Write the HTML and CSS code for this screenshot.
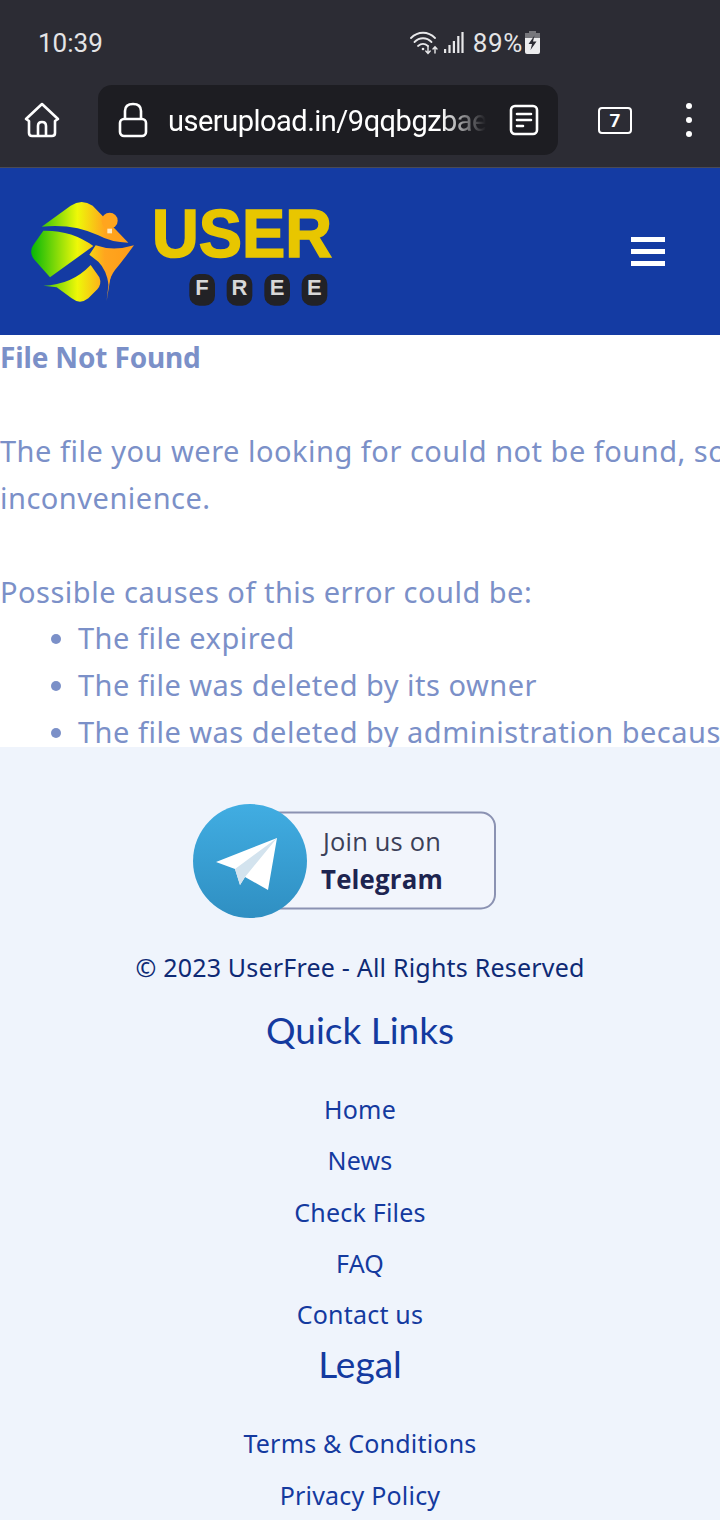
FILE: index.html
```html
<!DOCTYPE html>
<html lang="en">
<head>
    <meta charset="UTF-8">
    <meta name="viewport" content="width=device-width, initial-scale=1.0">
    <title>File Not Found - UserFree</title>
    <link rel="stylesheet" href="styles.css">
</head>
<body>
    <!-- Phone status bar and browser toolbar -->
    <div class="chrome">
        <div class="status-bar">
            <span class="clock">10:39</span>
            <div class="status-icons">
                <svg class="icon-wifi" width="30" height="24" viewBox="0 0 30 24" fill="none" stroke="#e8e8ea" stroke-linecap="round">
                    <path d="M1 7 C8 0 18 0 25 7" stroke-width="1.8"/>
                    <path d="M4.5 11 C9.5 6 16.5 6 21.5 11" stroke-width="1.8"/>
                    <path d="M8 15 C11 12.5 15 12.5 18 15" stroke-width="1.8"/>
                    <circle cx="13" cy="18" r="1.3" fill="#e8e8ea" stroke="none"/>
                    <path d="M18 15 V22 M15.8 20 L18 22.4 L20.2 20" stroke-width="1.4"/>
                    <path d="M25 22 V16 M23 18 L25 15.8 L27 18" stroke-width="1.4"/>
                </svg>
                <svg class="icon-signal" width="20" height="22" viewBox="0 0 20 22" fill="#e8e8ea">
                    <rect x="0" y="17" width="2.2" height="4"/>
                    <rect x="4.4" y="13" width="2.2" height="8"/>
                    <rect x="8.8" y="9" width="2.2" height="12"/>
                    <rect x="13.2" y="4" width="2.2" height="17"/>
                    <rect x="17.4" y="0" width="2.2" height="21"/>
                </svg>
                <span class="battery-level">89%</span>
                <svg class="icon-battery" width="15" height="23" viewBox="0 0 15 23">
                    <path d="M4 0 H11 V2 H15 V9 H0 V2 H4 Z" fill="#77777c"/>
                    <path d="M0 7 H15 V21 Q15 23 13 23 H2 Q0 23 0 21 Z" fill="#ececee"/>
                    <path d="M9.5 4.5 L3.5 13 H7 L5.5 19 L11.5 10.5 H8 Z" fill="#2c2c34"/>
                </svg>
            </div>
        </div>
        <div class="toolbar">
            <svg class="icon-home" width="36" height="36" viewBox="0 0 36 36" fill="none" stroke="#fff" stroke-width="2.6" stroke-linejoin="round">
                <path d="M2 17 L18 2 L34 17 L31 19 V31 Q31 34 28 34 H8 Q5 34 5 31 V19 Z"/>
                <path d="M14 34 V24 Q14 20 18 20 Q22 20 22 24 V34"/>
            </svg>
            <div class="url-bar">
                <svg class="icon-lock" width="30" height="36" viewBox="0 0 30 36" fill="none" stroke="#fff" stroke-width="2.6">
                    <path d="M7 17 V9 Q7 2 15 2 Q23 2 23 9 V17"/>
                    <rect x="2" y="17" width="26" height="17" rx="4"/>
                </svg>
                <span class="url-text">userupload.in/9qqbgzbaelu</span>
                <svg class="icon-doc" width="30" height="32" viewBox="0 0 30 32" fill="none" stroke="#fff" stroke-width="2.6" stroke-linecap="round">
                    <rect x="2" y="2" width="26" height="28" rx="4"/>
                    <path d="M8 10 H22 M8 16 H22 M8 22 H14"/>
                </svg>
            </div>
            <div class="tab-count">7</div>
            <div class="more-dots"><span></span><span></span><span></span></div>
        </div>
    </div>

    <!-- Site header -->
    <header class="site-header">
        <svg class="logo" width="360" height="167" viewBox="0 -6 1080 501">
            <defs>
                <linearGradient id="logoGrad" gradientUnits="userSpaceOnUse" x1="95" y1="0" x2="400" y2="0">
                    <stop offset="0" stop-color="#08b808"/>
                    <stop offset="0.45" stop-color="#eef808"/>
                    <stop offset="0.72" stop-color="#ffa51e"/>
                    <stop offset="1" stop-color="#ff9c18"/>
                </linearGradient>
            </defs>
            <!-- mark: four colour pieces with the blue showing between them -->
            <g fill="url(#logoGrad)">
                <path d="M125 170 L212 107 Q245 85 278 107 L305 135 L385 218 Q335 218 295 196 Q220 160 125 170 Z"/>
                <path d="M130 182 Q215 180 280 228 L150 322 L102 268 Q86 245 100 225 Z"/>
                <path d="M287 226 Q340 245 402 226 Q370 270 345 300 Q330 320 326 345 Q320 300 295 275 L268 254 Z"/>
                <path d="M130 347 Q215 345 272 285 L298 322 Q306 342 292 358 L265 385 Q240 405 215 385 L170 352 Z"/>
                <path d="M335 300 L320 392 L328 320 Z"/>
            </g>
            <circle cx="329" cy="152" r="24" fill="#ffa51e"/>
            <rect x="322" y="176" width="14" height="14" fill="#ffe9c0"/>
            <text class="logo-user" x="456" y="262" textLength="540" lengthAdjust="spacingAndGlyphs">USER</text>
            <g class="logo-keys">
                <rect x="568" y="312" width="77" height="95" rx="30"/>
                <rect x="680" y="312" width="77" height="95" rx="30"/>
                <rect x="793" y="312" width="77" height="95" rx="30"/>
                <rect x="905" y="312" width="77" height="95" rx="30"/>
            </g>
            <g class="logo-free">
                <text x="606" y="375">F</text>
                <text x="718" y="375">R</text>
                <text x="831" y="375">E</text>
                <text x="943" y="375">E</text>
            </g>
        </svg>
        <div class="menu-icon">
            <span class="bar"></span>
            <span class="bar"></span>
            <span class="bar"></span>
        </div>
    </header>

    <!-- Error message, cut off at the bottom by the frame -->
    <main class="content-frame">
        <div class="content-inner">
            <p class="error-title">File Not Found</p>
            <br>
            <p>The file you were looking for could not be found, sorry for any inconvenience.</p>
            <br>
            <p>Possible causes of this error could be:</p>
            <ul class="cause-list">
                <li>The file expired</li>
                <li>The file was deleted by its owner</li>
                <li>The file was deleted by administration because it didn't comply with our Terms of Use</li>
            </ul>
        </div>
    </main>

    <footer class="site-footer">
        <svg class="telegram-badge" width="304" height="116" viewBox="0 0 304 116">
            <defs>
                <linearGradient id="tgGrad" x1="0" y1="0" x2="0" y2="1">
                    <stop offset="0" stop-color="#41ade2"/>
                    <stop offset="1" stop-color="#2f8fc2"/>
                </linearGradient>
            </defs>
            <rect x="60" y="8.5" width="242" height="96" rx="14" fill="#f2f5fc" stroke="#8b92b2" stroke-width="2"/>
            <circle cx="57" cy="57" r="57" fill="url(#tgGrad)"/>
            <path d="M23 58 L84 34 L75 86 L52 73 L47 81 L42 65 Z" fill="#ffffff"/>
            <path d="M42 65 L84 34 L52 73 L47 81 Z" fill="#d3e3ee"/>
            <text class="badge-join" x="130" y="47" textLength="118" lengthAdjust="spacingAndGlyphs">Join us on</text>
            <text class="badge-telegram" x="128" y="85" textLength="122" lengthAdjust="spacingAndGlyphs">Telegram</text>
        </svg>
        <p class="copyright">© 2023 UserFree - All Rights Reserved</p>
        <h2 class="footer-heading">Quick Links</h2>
        <ul class="footer-links">
            <li><a href="#">Home</a></li>
            <li><a href="#">News</a></li>
            <li><a href="#">Check Files</a></li>
            <li><a href="#">FAQ</a></li>
            <li><a href="#">Contact us</a></li>
        </ul>
        <h2 class="footer-heading legal-heading">Legal</h2>
        <ul class="footer-links legal-links">
            <li><a href="#">Terms &amp; Conditions</a></li>
            <li><a href="#">Privacy Policy</a></li>
        </ul>
    </footer>
</body>
</html>
```

FILE: styles.css
```css
/* Basic reset */
body, html {
    margin: 0;
    padding: 0;
    width: 720px;
    height: 1520px;
    overflow: hidden;
    background-color: #eff4fc;
    font-family: 'Noto Sans', 'Open Sans', sans-serif;
}

p, ul, h2 {
    margin: 0;
    padding: 0;
}

/* Browser chrome */
.chrome {
    height: 167px;
    background-color: #2c2c34;
    border-bottom: 1px solid #4a4a55;
    font-family: 'Roboto', sans-serif;
    color: #ffffff;
}

.status-bar {
    height: 85px;
    display: flex;
    align-items: center;
    padding-left: 38px;
}

.clock {
    font-size: 26px;
    color: #e4e4e6;
}

.status-icons {
    margin-left: 307px;
    display: flex;
    align-items: center;
}

.icon-signal {
    margin-left: 4px;
}

.battery-level {
    margin-left: 9px;
    font-size: 26px;
    letter-spacing: 0.6px;
    color: #e4e4e6;
}

.icon-battery {
    margin-left: 2px;
}

.toolbar {
    height: 70px;
    display: flex;
    align-items: center;
    padding-left: 24px;
}

.url-bar {
    width: 460px;
    height: 70px;
    margin-left: 38px;
    padding-left: 20px;
    box-sizing: border-box;
    background-color: #1d1d22;
    border-radius: 14px;
    display: flex;
    align-items: center;
}

.url-text {
    width: 318px;
    margin-left: 20px;
    padding-top: 2px;
    overflow: hidden;
    white-space: nowrap;
    font-size: 29px;
    letter-spacing: -0.5px;
    -webkit-mask-image: linear-gradient(to right, #000 86%, transparent 100%);
    mask-image: linear-gradient(to right, #000 86%, transparent 100%);
}

.icon-doc {
    margin-left: 23px;
}

.tab-count {
    width: 30px;
    height: 23px;
    margin-left: 40px;
    border: 2.5px solid #ffffff;
    border-radius: 4px;
    display: flex;
    align-items: center;
    justify-content: center;
    font-size: 19px;
    font-weight: 700;
}

.more-dots {
    margin-left: 54px;
    display: flex;
    flex-direction: column;
    gap: 8px;
}

.more-dots span {
    width: 6px;
    height: 6px;
    border-radius: 50%;
    background-color: #ffffff;
}

/* Site header */
.site-header {
    height: 167px;
    background-color: #143ba3;
    display: flex;
    align-items: center;
    justify-content: space-between;
    padding-right: 55px;
}

.logo-user {
    font-family: 'Liberation Sans', sans-serif;
    font-weight: 700;
    font-size: 208px;
    fill: #e8c600;
    stroke: #e8c600;
    stroke-width: 5px;
}

.logo-keys {
    fill: #222226;
}

.logo-free {
    font-family: 'Liberation Sans', sans-serif;
    font-weight: 700;
    font-size: 66px;
    text-anchor: middle;
    fill: #d8d8d8;
}

.menu-icon .bar {
    display: block;
    width: 34px;
    height: 5px;
    margin: 7px 0;
    background-color: #ffffff;
}

/* Error message */
.content-frame {
    height: 412px;
    overflow: hidden;
    background-color: #ffffff;
}

.content-inner {
    width: 900px;
    margin-top: -1px;
    font-size: 29px;
    line-height: 46.9px;
    letter-spacing: 0.5px;
    color: #7b90c8;
}

.error-title {
    font-size: 28px;
    font-weight: 700;
    letter-spacing: -0.15px;
}

.cause-list {
    padding-left: 78px;
}

/* Footer */
.site-footer {
    padding-top: 57px;
    text-align: center;
    color: #143a9f;
    font-size: 25px;
    letter-spacing: 0.2px;
}

.telegram-badge {
    display: block;
    margin-left: 193px;
}

.badge-join {
    font-family: 'Open Sans', sans-serif;
    font-size: 26px;
    fill: #3c4058;
}

.badge-telegram {
    font-family: 'Open Sans', sans-serif;
    font-size: 27px;
    font-weight: 700;
    fill: #1d2450;
}

.copyright {
    margin-top: 29px;
    color: #0e2a75;
    line-height: 36px;
}

.footer-heading {
    margin-top: 20px;
    font-family: 'Lato', sans-serif;
    font-size: 37px;
    font-weight: 400;
    letter-spacing: 0;
    line-height: 50px;
    color: #143a9f;
}

.footer-heading.legal-heading {
    margin-top: -1px;
}

.footer-links {
    list-style: none;
    margin-top: 29px;
}

.footer-links.legal-links {
    margin-top: 29px;
}

.footer-links li {
    line-height: 51.3px;
}

.footer-links a {
    color: #143a9f;
    text-decoration: none;
}
```
